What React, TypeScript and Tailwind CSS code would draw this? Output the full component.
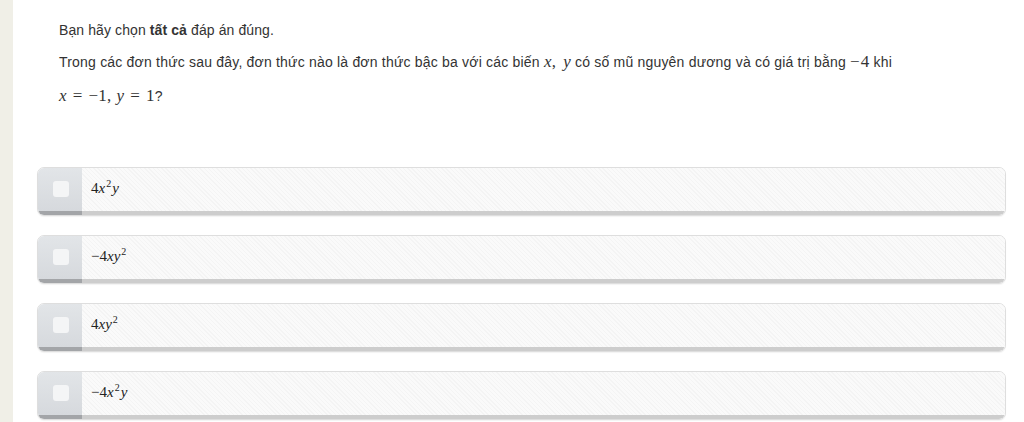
import React from "react";

const V = ({ children }: { children: React.ReactNode }) => (
  <span className="italic">{children}</span>
);

const Sup = ({ children }: { children: React.ReactNode }) => (
  <sup className="relative top-[-6px] ml-[1px] mr-[1px] text-[10px] not-italic">{children}</sup>
);

const OPTIONS: React.ReactNode[] = [
  <>4<V>x</V><Sup>2</Sup><V>y</V></>,
  <>−4<V>xy</V><Sup>2</Sup></>,
  <>4<V>xy</V><Sup>2</Sup></>,
  <>−4<V>x</V><Sup>2</Sup><V>y</V></>,
];

function Option({ children }: { children: React.ReactNode }) {
  return (
    <div className="flex h-[49px] overflow-hidden rounded-[7px] border border-[#dedede] shadow-[0_1px_1px_rgba(0,0,0,0.05)]">
      <div className="flex w-[44px] shrink-0 items-center justify-center border-b-4 border-b-[#a3a5a8] bg-gradient-to-b from-[#e2e5e8] to-[#d6d9dd]">
        <span className="mb-[1px] ml-[1px] h-[16px] w-[16px] rounded-[3px] bg-[#f4f5f6]" />
      </div>
      <div className="flex flex-1 items-center border-b-4 border-b-[#cdcdcd] bg-[#fafafa] bg-[repeating-linear-gradient(45deg,#fafafa_0px,#fafafa_2px,#f4f4f4_2px,#f4f4f4_3px)] pl-[9px] pb-[2px] font-['Liberation_Serif',serif] text-[15px] text-[#222]">
        <span>{children}</span>
      </div>
    </div>
  );
}

const M = ({ children }: { children: React.ReactNode }) => (
  <span className="font-['Liberation_Serif',serif] text-[17px]">{children}</span>
);

export default function App() {
  return (
    <div className="flex h-[422px] w-[1024px] overflow-hidden bg-white">
      <aside className="w-[13px] shrink-0 bg-[#f0efe7]" />
      <main className="flex-1 pl-[24px] pr-[18px] font-['Liberation_Sans',Arial,sans-serif] text-[14px] text-[#333]">
        <div className="pl-[22px] pr-[60px]">
          <p className="mt-[20px] leading-[20px] tracking-[0.1px]">
            Bạn hãy chọn <b>tất cả</b> đáp án đúng.
          </p>
          <p className="mt-[5px] leading-[34px] tracking-[0.2px]">
            Trong các đơn thức sau đây, đơn thức nào là đơn thức bậc ba với các biến{" "}
            <M>
              <V>x</V>,<span className="ml-[7px]" />
              <V>y</V>
            </M>{" "}
            có số mũ nguyên dương và có giá trị bằng{" "}
            <M>
              −<span className="ml-[1px]" />4
            </M>{" "}
            khi
            <br />
            <M>
              <V>x</V>
              <span className="mx-[6px]">=</span>−1,
              <span className="ml-[5px]" />
              <V>y</V>
              <span className="mx-[6px]">=</span>1
            </M>
            ?
          </p>
        </div>
        <div className="mt-[54px] flex flex-col gap-[19px]">
          {OPTIONS.map((o, i) => (
            <Option key={i}>{o}</Option>
          ))}
        </div>
      </main>
    </div>
  );
}
